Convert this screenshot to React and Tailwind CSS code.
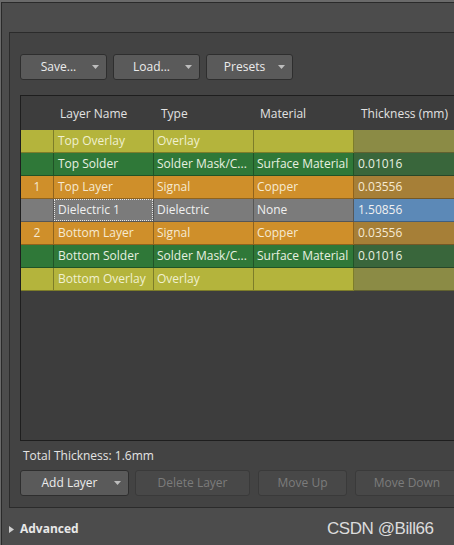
import React from 'react';

const FONT = { fontFamily: '"Open Sans", "Noto Sans", "DejaVu Sans", sans-serif' };

// row colours: cells for col0..col3, then the thickness column
const KIND = {
  overlay: { cell: 'bg-[#b4b43c]', thick: 'bg-[#8b8b45]', text: 'text-[#f0f0d0]' },
  solder: { cell: 'bg-[#2f7838]', thick: 'bg-[#39663b]', text: 'text-[#e8f0e0]' },
  signal: { cell: 'bg-[#cf8f2a]', thick: 'bg-[#a67f37]', text: 'text-[#f6ead2]' },
  dielectric: { cell: 'bg-[#7b7b7b]', thick: 'bg-[#5c89b7]', text: 'text-[#f0f0f0]' },
};

const LAYERS = [
  { num: '', name: 'Top Overlay', type: 'Overlay', material: '', thickness: '', kind: 'overlay' },
  { num: '', name: 'Top Solder', type: 'Solder Mask/C...', material: 'Surface Material', thickness: '0.01016', kind: 'solder' },
  { num: '1', name: 'Top Layer', type: 'Signal', material: 'Copper', thickness: '0.03556', kind: 'signal' },
  { num: '', name: 'Dielectric 1', type: 'Dielectric', material: 'None', thickness: '1.50856', kind: 'dielectric', focused: true },
  { num: '2', name: 'Bottom Layer', type: 'Signal', material: 'Copper', thickness: '0.03556', kind: 'signal' },
  { num: '', name: 'Bottom Solder', type: 'Solder Mask/C...', material: 'Surface Material', thickness: '0.01016', kind: 'solder' },
  { num: '', name: 'Bottom Overlay', type: 'Overlay', material: '', thickness: '', kind: 'overlay' },
];

function Caret() {
  return (
    <svg width="7" height="4" viewBox="0 0 7 4" className="shrink-0">
      <path d="M0 0h7L3.5 4z" fill="#bdbdbd" />
    </svg>
  );
}

function DropButton({ label, width }) {
  return (
    <div
      className="h-[26px] flex items-center rounded-[3px] border border-[#2e2e2e] bg-[#5a5a5a] text-[#ececec] text-[12px]"
      style={{ width }}
    >
      <span className="flex-1 text-center pl-1">{label}</span>
      <span className="pr-[7px]"><Caret /></span>
    </div>
  );
}

function DisabledButton({ label, width }) {
  return (
    <div
      className="h-[26px] flex items-center justify-center rounded-[3px] border border-[#3a3a3a] bg-[#484848] text-[#7c7c7c] text-[12px] shrink-0"
      style={{ width }}
    >
      {label}
    </div>
  );
}

export default function App() {
  const cols = 'grid grid-cols-[33px_100px_100px_100px_110px]';

  return (
    <div className="w-[454px] h-[545px] overflow-hidden bg-[#6a6a6a] relative" style={FONT}>
      {/* outer window */}
      <div className="absolute left-[1px] top-[2px] w-[480px] h-[560px] border border-[#2a2a2a] bg-[#4c4c4c]">
        {/* stack panel */}
        <div className="ml-[7px] mt-[29px] w-[470px] h-[476px] border border-[#2b2b2b] bg-[#434343] pl-[10px] pt-[21px]">
          <div className="flex gap-[6px]">
            <DropButton label="Save..." width={87} />
            <DropButton label="Load..." width={87} />
            <DropButton label="Presets" width={87} />
          </div>

          {/* layer table */}
          <div className="mt-[15px] h-[346px] border border-[#1e1e1e] bg-[#3d3d3d] text-[12px]">
            <div className={`${cols} h-[34px] items-center text-[#e2e2e2] pt-[2px]`}>
              <span />
              <span className="pl-[6px]">Layer Name</span>
              <span className="pl-[7px]">Type</span>
              <span className="pl-[6px]">Material</span>
              <span className="pl-[7px]">Thickness (mm)</span>
            </div>
            {LAYERS.map((l, i) => {
              const k = KIND[l.kind];
              return (
                <div key={i} className={`${cols} h-[23px] ${k.text}`}>
                  <div className={`${k.cell} border-r border-b border-black/30 flex items-center justify-center`}>{l.num}</div>
                  <div className={`${k.cell} border-r border-b border-black/30 flex items-center ${l.focused ? '' : 'pl-[4px]'}`}>
                    {l.focused ? (
                      <span className="h-full w-full flex items-center pl-[3px] border border-dotted border-[#e8e8e8]">{l.name}</span>
                    ) : l.name}
                  </div>
                  <div className={`${k.cell} border-r border-b border-black/30 flex items-center pl-[3px] whitespace-nowrap overflow-hidden`}>{l.type}</div>
                  <div className={`${k.cell} border-r border-b border-black/30 flex items-center pl-[3px] whitespace-nowrap overflow-hidden`}>{l.material}</div>
                  <div className={`${k.thick} border-b border-black/30 flex items-center pl-[4px]`}>{l.thickness}</div>
                </div>
              );
            })}
          </div>

          <div className="mt-[6px] pl-[3px] text-[12px] text-[#e4e4e4]">Total Thickness: 1.6mm</div>

          <div className="mt-[5px] flex gap-[6px]">
            <DropButton label="Add Layer" width={109} />
            <div className="flex gap-[8px]">
              <DisabledButton label="Delete Layer" width={115} />
              <DisabledButton label="Move Up" width={89} />
              <DisabledButton label="Move Down" width={104} />
            </div>
          </div>
        </div>

        {/* advanced */}
        <div className="mt-[12px] ml-[7px] flex items-center gap-[6px] text-[12px] font-bold text-[#e8e8e8]">
          <svg width="5" height="7" viewBox="0 0 5 7"><path d="M0 0l5 3.5L0 7z" fill="#d0d0d0" /></svg>
          <span>Advanced</span>
        </div>
      </div>

      {/* watermark */}
      <div className="absolute left-[327px] top-[516px] text-[17px] text-[#dcdcdc] tracking-tight" style={{ fontFamily: '"Liberation Sans", Arial, sans-serif' }}>
        CSDN @Bill66
      </div>
    </div>
  );
}
